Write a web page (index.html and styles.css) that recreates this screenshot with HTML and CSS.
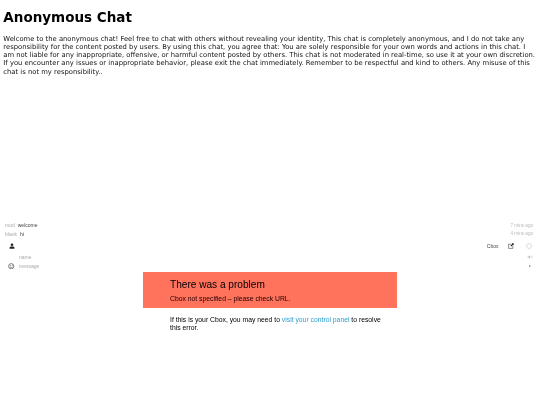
FILE: index.html
```html
<!DOCTYPE html>
<html lang="en">
<head>
<meta charset="utf-8">
<title>Anonymous Chat</title>
<link rel="stylesheet" href="styles.css">
</head>
<body>
<header class="intro">
  <h1>Anonymous Chat</h1>
  <p>Welcome to the anonymous chat! Feel free to chat with others without revealing your identity, This chat is completely anonymous, and I do not take any responsibility for the content posted by users. By using this chat, you agree that: You are solely responsible for your own words and actions in this chat. I am not liable for any inappropriate, offensive, or harmful content posted by others. This chat is not moderated in real-time, so use it at your own discretion. If you encounter any issues or inappropriate behavior, please exit the chat immediately. Remember to be respectful and kind to others. Any misuse of this chat is not my responsibility..</p>
</header>
<section class="chat">
  <div class="msg"><span class="who">mod</span><span class="txt">welcome</span><span class="time">7 mins ago</span></div>
  <div class="msg"><span class="who">blank</span><span class="txt">hi</span><span class="time">4 mins ago</span></div>
  <div class="bar">
    <svg class="ic-user" viewBox="0 0 10 10"><circle cx="5" cy="3" r="2.2"/><path d="M1 9.500V8q0-2 2.500-2h3Q9 6 9 8v1.500z"/></svg>
    <span class="brand">Cbox</span>
    <svg class="ic-ext" viewBox="0 0 10 10"><path d="M1 2h4M1 2v7h7V5" fill="none" stroke="#444" stroke-width="1"/><path d="M6 0.500h3.500V4L8.500 3 5.500 6 4 4.500 7 1.500z" fill="#222"/></svg>
    <span class="ring"></span>
  </div>
  <div class="row name"><span class="label">name</span><svg class="ic-sound" viewBox="0 0 10 10"><path d="M1 4h2l2-2v6L3 6H1z" fill="#bbb"/><path d="M6.500 3.500q1 1.500 0 3M8 2.500q1.500 2.500 0 5" fill="none" stroke="#ccc"/></svg></div>
  <div class="row message">
    <svg class="ic-smile" viewBox="0 0 10 10"><circle cx="5" cy="5" r="4" fill="none" stroke="#555" stroke-width="1.200"/><path d="M3 6q2 2 4 0" fill="none" stroke="#555"/><circle cx="3.600" cy="3.800" r=".7" fill="#555"/><circle cx="6.400" cy="3.800" r=".7" fill="#555"/></svg>
    <span class="label">message</span>
    <svg class="ic-play" viewBox="0 0 6 6"><path d="M1.500 1l3 2-3 2z" fill="#999"/></svg>
  </div>
</section>
<section class="error">
  <div class="banner">
    <h2>There was a problem</h2>
    <p>Cbox not specified – please check URL.</p>
  </div>
  <p class="help">If this is your Cbox, you may need to <a href="#">visit your control panel</a> to resolve this error.</p>
</section>
</body>
</html>
```
FILE: styles.css
```css
html, body { margin: 0; padding: 0; background: #fff; }
body { width: 540px; height: 405px; overflow: hidden; font-family: "DejaVu Sans", sans-serif; color: #000; filter: blur(0.3px); }

.intro { padding: 9px 3.330px 0; height: 212px; box-sizing: border-box; }
.intro h1 { margin: 0 0 9.500px; font-size: 13.500px; line-height: 16px; font-weight: 700; }
.intro p { margin: 0; font-size: 6.810px; line-height: 8.250px; color: #111; }

.chat { height: 60px; box-sizing: border-box; padding-top: 9px; font-family: "Liberation Sans", sans-serif; font-size: 5px; color: #aaa; }
.msg { display: flex; height: 8.500px; align-items: center; padding: 0 7px 0 5px; gap: 3px; }
.msg .txt { color: #444; flex: 1; }
.msg .time { color: #bbb; font-size: 4.600px; }

.bar { display: flex; align-items: center; height: 14px; margin-top: 1px; padding: 0 8px 0 9px; }
.ic-user { width: 6px; height: 6px; fill: #222; margin-right: auto; }
.brand { color: #444; font-size: 5px; margin-right: 9.500px; }
.ic-ext { width: 6px; height: 6px; margin-right: 12px; }
.ring { width: 4px; height: 4px; border: 1px solid #ddd; border-radius: 50%; }

.row { display: flex; align-items: center; height: 8.500px; }
.row.name { padding: 0 7px 0 19px; justify-content: space-between; }
.row.message { padding: 0 8px 0 8px; }
.ic-sound { width: 6px; height: 6px; }
.ic-smile { width: 6.500px; height: 6.500px; margin-right: 4.500px; }
.ic-play { width: 4px; height: 4px; margin-left: auto; }

.error { margin: 0 143px; font-family: "Liberation Sans", sans-serif; }
.banner { background: #ff725c; padding: 6px 27px 0; height: 36px; box-sizing: border-box; }
.banner h2 { margin: 0; font-size: 10.100px; line-height: 13px; font-weight: 400; color: #000; }
.banner p { margin: 3px 0 0; font-size: 6.800px; line-height: 9px; color: #200; }
.help { margin: 8px 0 0; padding: 0 15px 0 27px; font-size: 6.800px; line-height: 8.250px; color: #000; }
.help a { color: #2a9fd0; text-decoration: none; }
```
